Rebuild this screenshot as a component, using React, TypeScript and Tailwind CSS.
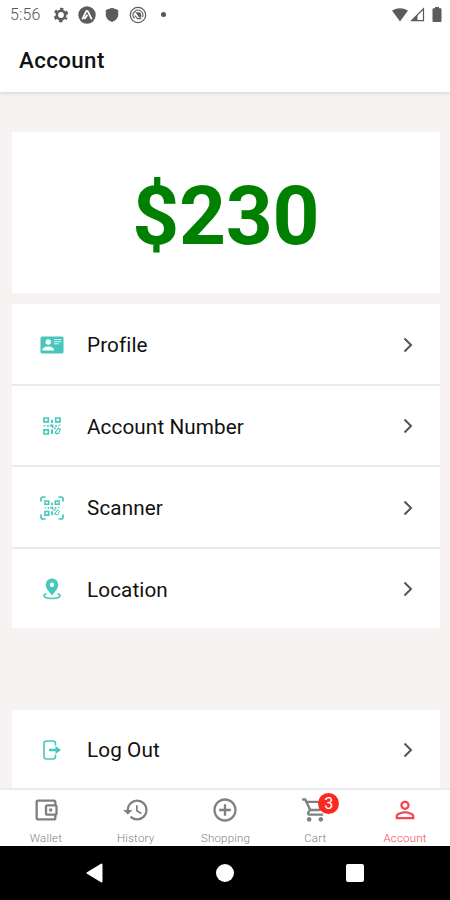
import React from 'react';
import {
  MdAddCircleOutline,
  MdHistory,
  MdOutlineAccountBalanceWallet,
  MdOutlineShoppingCart,
  MdPersonOutline,
} from 'react-icons/md';

const StatusBar = () => (
  <div className="flex h-[29px] shrink-0 items-center justify-between pl-[10px] pr-2 text-[#5c5c5c]">
    <div className="flex items-center">
      <span className="w-[43px] text-[16px] font-light leading-none tracking-[0.1px] text-[#555]">5:56</span>
      <svg className="h-4 w-4" viewBox="0 0 16 16">
        <circle cx="8" cy="8" r="4.200" fill="none" stroke="currentColor" strokeWidth="2.600" />
        <circle cx="8" cy="8" r="6.200" fill="none" stroke="currentColor" strokeWidth="2.200" strokeDasharray="3.2 3.293" strokeDashoffset="1.600" transform="rotate(30 8 8)" />
      </svg>
      <svg className="ml-[9px] h-[18px] w-[18px]" viewBox="0 0 18 18">
        <circle cx="9" cy="9" r="8.700" fill="currentColor" />
        <path d="M4.600 12.600 8 5.600q1-1.500 2 0l3.400 7M6.800 12.400 9 9.400" fill="none" stroke="white" strokeWidth="1.800" strokeLinecap="round" />
      </svg>
      <svg className="ml-[9px] h-4 w-[14px]" viewBox="0 0 14 16">
        <path d="M7 .8 13.200 3v4.800c0 3.200-2.500 5.800-6.200 7.200C3.300 13.600.8 11 .8 7.800V3z" fill="currentColor" />
      </svg>
      <svg className="ml-[10px] h-[18px] w-[18px]" viewBox="0 0 18 18" fill="none" stroke="currentColor">
        <circle cx="9" cy="9" r="7.700" strokeWidth="1.200" />
        <path d="M5.500 12.500A4.900 4.900 0 1 1 13.500 11" strokeWidth="1.100" />
        <path d="M6.200 6.300h4q2 .2 2 2.200v3H10L8.500 9z" fill="currentColor" stroke="none" />
        <path d="m5.800 9.600 3 3h3.500" strokeWidth="1.100" />
      </svg>
      <span className="ml-[14px] h-[5px] w-[5px] rounded-full bg-[#555]" />
    </div>
    <div className="flex items-center">
      <svg className="h-[14px] w-4" viewBox="0 0 16 14">
        <path d="M0 2.600Q8-2 16 2.600L8 13.500z" fill="currentColor" />
      </svg>
      <svg className="ml-[2px] h-[15px] w-[15px]" viewBox="0 0 15 15">
        <path d="M1.600 13.700H13.500V1.800z" fill="none" stroke="currentColor" strokeWidth="1.200" />
        <path d="M1 14 7.500 7.500V14z" fill="currentColor" />
      </svg>
      <svg className="ml-[7px] h-[15px] w-[10px]" viewBox="0 0 10 15">
        <path d="M3 0h4v1.300h1.500q1 0 1 1V14q0 1-1 1h-7q-1 0-1-1V2.300q0-1 1-1H3z" fill="currentColor" />
      </svg>
    </div>
  </div>
);

const ProfileIcon = () => (
  <svg className="h-[18px] w-6" viewBox="0 0 24 18">
    <rect x=".5" y=".5" width="23" height="17" rx="1.500" fill="currentColor" />
    <circle cx="8.200" cy="6" r="2.700" fill="white" />
    <path d="M2.300 14.600c0-3.200 2.800-4.200 5.900-4.200s5.900 1 5.900 4.200z" fill="white" />
    <path d="M14 3.600h7.500M14 5.700h7.500M14 7.800h5" stroke="white" strokeWidth=".8" />
  </svg>
);

// Shared by the plain code and the framed scanner icon
const QrShapes = () => (
  <>
    <path d="M1 1h4.300v3.800H1zM12.700 1H17v3.800h-4.300zM1 12.800h4.300V17H1z" fill="none" stroke="currentColor" strokeWidth="1.700" />
    <path d="M8 3h2v3H8zM7 7.500h3.500v3.500H9V9.500H7zM.5 8.200h2v1.200h-2zM4.200 8h1.500v2.200H4.200zM8 12.500h2V17H8zM12.300 8h1.500v2h-1.500zM15.500 7.500h1.800v1.300h-1.800zM11 10.500h1.700v1.800H11z" fill="currentColor" />
    <path d="M11.500 16.500 15.500 11l1.800 1.500-1.500 3.700-2.400.6-1-2.500" fill="none" stroke="currentColor" strokeWidth="1.100" />
  </>
);

const QrIcon = () => (
  <svg className="h-[18px] w-[18px]" viewBox="0 0 18 18">
    <QrShapes />
  </svg>
);

const ScannerIcon = () => (
  <svg className="h-6 w-6" viewBox="0 0 24 24">
    <path d="M1 5.500V3q0-2 2-2h2.500M18.500 1H21q2 0 2 2v2.500M23 18.500V21q0 2-2 2h-2.500M5.500 23H3q-2 0-2-2v-2.500" fill="none" stroke="currentColor" strokeWidth="1.700" />
    <g transform="translate(4 4) scale(.89)">
      <QrShapes />
    </g>
  </svg>
);

const LocationIcon = () => (
  <svg className="h-[22px] w-[18px]" viewBox="0 0 18 22">
    <path d="M9 .5a6.300 6.300 0 0 0-6.300 6.300C2.700 11 9 17.300 9 17.300s6.300-6.300 6.300-10.500A6.300 6.300 0 0 0 9 .5zm0 4a2.200 2.200 0 1 1 0 4.400 2.200 2.200 0 0 1 0-4.400z" fill="currentColor" fillRule="evenodd" />
    <path d="M3.500 15.800c-1.700.5-2.500 1-2.500 1.700 0 1.700 3.500 3 8 3s8-1.300 8-3c0-.7-.8-1.200-2.500-1.700" fill="none" stroke="currentColor" strokeWidth="1.600" />
  </svg>
);

const LogOutIcon = () => (
  <svg className="h-5 w-[18px]" viewBox="0 0 18 20">
    <path d="M12.500 5.500V3.500Q12.500 1 10 1H3.500Q1 1 1 3.500v13Q1 19 3.500 19H10q2.500 0 2.500-2.500v-2" fill="none" stroke="currentColor" strokeWidth="1.600" />
    <path d="M6 8.700h6.500V6l5.500 4-5.500 4v-2.700H6z" fill="currentColor" />
  </svg>
);

const menuItems = [
  { label: 'Profile', icon: <ProfileIcon /> },
  { label: 'Account Number', icon: <QrIcon /> },
  { label: 'Scanner', icon: <ScannerIcon /> },
  { label: 'Location', icon: <LocationIcon /> },
];

const tabs = [
  { label: 'Wallet', Icon: MdOutlineAccountBalanceWallet },
  { label: 'History', Icon: MdHistory },
  { label: 'Shopping', Icon: MdAddCircleOutline },
  { label: 'Cart', Icon: MdOutlineShoppingCart, badge: 3 },
  { label: 'Account', Icon: MdPersonOutline, active: true },
];

const MenuRow = ({ label, icon }: { label: string; icon: React.ReactNode }) => (
  <div className="flex h-full items-center pl-7 pr-[27px]">
    <span className="flex w-6 justify-center text-[#45c8bb]">{icon}</span>
    <span className="ml-[23px] flex-1 pt-[2px] text-[20.7px] leading-none tracking-[0.1px] text-[#111]">{label}</span>
    <svg className="h-4 w-[10px]" viewBox="0 0 10 16">
      <path d="m1.500 1.500 6.500 6.500-6.500 6.500" fill="none" stroke="#555" strokeWidth="2" />
    </svg>
  </div>
);

export default function App() {
  return (
    <div className="flex h-[900px] w-[450px] flex-col overflow-hidden bg-[#f6f3f2] font-['Roboto',sans-serif]">
      <header className="z-10 h-[92px] shrink-0 bg-white shadow-[0_1px_4px_rgba(0,0,0,0.15)]">
        <StatusBar />
        <h1 className="flex h-[64px] items-center pl-[19px] text-[22.3px] font-medium tracking-[0.4px] text-[#111]">Account</h1>
      </header>

      <main className="min-h-0 flex-1 overflow-hidden pl-3 pr-[10.5px] pt-10">
        {/* Balance */}
        <section className="flex h-[161px] items-center justify-center bg-white pt-[7px] text-[82px] font-bold leading-none tracking-[-0.3px] text-[#008000]">
          <span>$230</span>
        </section>

        <section className="mt-[11px] h-[324px] bg-white">
          {menuItems.map((item, i) => (
            <div key={item.label} className={i < 3 ? 'h-[81.5px] border-b-2 border-[#e9eaeb] pt-[2px]' : 'h-[79.5px] pt-[2px]'}>
              <MenuRow {...item} />
            </div>
          ))}
        </section>

        <section className="mt-[82px] h-[79px] bg-white">
          <MenuRow label="Log Out" icon={<LogOutIcon />} />
        </section>
      </main>

      {/* Tab bar */}
      <nav className="grid h-[58px] shrink-0 grid-cols-5 border-t-2 border-[#ebebeb] bg-white pl-px">
        {tabs.map(({ label, Icon, badge, active }) => (
          <div key={label} className={`flex flex-col items-center pt-[6px] ${active ? 'text-[#f84450]' : 'text-[#808080]'}`}>
            <div className="relative">
              <Icon className="h-7 w-7" />
              {badge && (
                <span className="absolute left-[17px] top-[-3px] flex h-[21px] w-[21px] items-center justify-center rounded-full bg-[#fb2a20] text-[16px] leading-none text-white">
                  {badge}
                </span>
              )}
            </div>
            <span className="mt-[8px] text-[11.5px] font-light leading-[12px] tracking-[0.2px]">{label}</span>
          </div>
        ))}
      </nav>

      {/* System navigation */}
      <div className="flex h-[54px] shrink-0 items-center bg-black pl-[86px] text-white">
        <svg className="h-5 w-[17px]" viewBox="0 0 17 20">
          <path d="M15.500 1.500v17L1.500 10z" fill="white" stroke="white" strokeWidth="2" strokeLinejoin="round" />
        </svg>
        <span className="ml-[113px] h-[18px] w-[18px] rounded-full bg-white" />
        <span className="ml-[112px] h-[18px] w-[18px] rounded-[2px] bg-white" />
      </div>
    </div>
  );
}
